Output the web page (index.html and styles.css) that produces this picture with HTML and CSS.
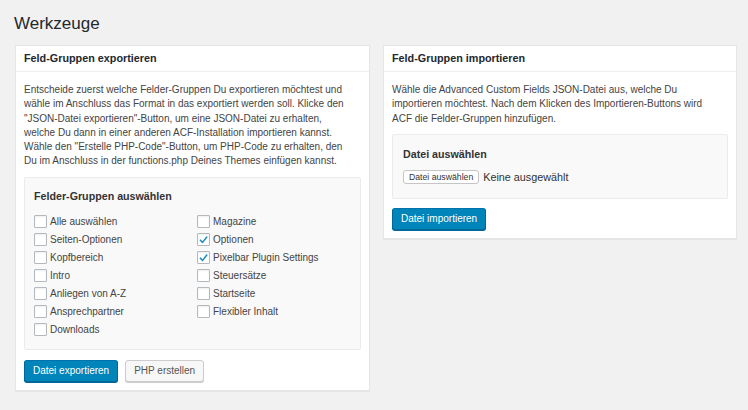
FILE: index.html
```html
<!DOCTYPE html>
<html lang="de">
<head>
<meta charset="utf-8">
<link rel="stylesheet" href="styles.css">
</head>
<body>
<div class="wrap">
  <h1 class="title">Werkzeuge</h1>
  <div class="columns">
    <div class="panel">
      <h2 class="panel-head">Feld-Gruppen exportieren</h2>
      <div class="panel-body">
        <p class="desc">Entscheide zuerst welche Felder-Gruppen Du exportieren möchtest und wähle im Anschluss das Format in das exportiert werden soll. Klicke den "JSON-Datei exportieren"-Button, um eine JSON-Datei zu erhalten, welche Du dann in einer anderen ACF-Installation importieren kannst. Wähle den "Erstelle PHP-Code"-Button, um PHP-Code zu erhalten, den Du im Anschluss in der functions.php Deines Themes einfügen kannst.</p>
        <div class="field-box">
          <div class="field-label">Felder-Gruppen auswählen</div>
          <div class="check-grid">
            <ul class="check-col">
              <li class="check"><span class="box"></span>Alle auswählen</li>
              <li class="check"><span class="box"></span>Seiten-Optionen</li>
              <li class="check"><span class="box"></span>Kopfbereich</li>
              <li class="check"><span class="box"></span>Intro</li>
              <li class="check"><span class="box"></span>Anliegen von A-Z</li>
              <li class="check"><span class="box"></span>Ansprechpartner</li>
              <li class="check"><span class="box"></span>Downloads</li>
            </ul>
            <ul class="check-col">
              <li class="check"><span class="box"></span>Magazine</li>
              <li class="check"><span class="box"><svg viewBox="0 0 12 12" width="12" height="12"><path d="M2.6 6.2 L5 8.6 L9.6 2.8" fill="none" stroke="#1e8cbe" stroke-width="1.7" stroke-linecap="round" stroke-linejoin="round"/></svg></span>Optionen</li>
              <li class="check"><span class="box"><svg viewBox="0 0 12 12" width="12" height="12"><path d="M2.6 6.2 L5 8.6 L9.6 2.8" fill="none" stroke="#1e8cbe" stroke-width="1.7" stroke-linecap="round" stroke-linejoin="round"/></svg></span>Pixelbar Plugin Settings</li>
              <li class="check"><span class="box"></span>Steuersätze</li>
              <li class="check"><span class="box"></span>Startseite</li>
              <li class="check"><span class="box"></span>Flexibler Inhalt</li>
            </ul>
          </div>
        </div>
        <div class="actions">
          <button class="btn btn-primary">Datei exportieren</button>
          <button class="btn btn-secondary">PHP erstellen</button>
        </div>
      </div>
    </div>
    <div class="panel">
      <h2 class="panel-head">Feld-Gruppen importieren</h2>
      <div class="panel-body">
        <p class="desc">Wähle die Advanced Custom Fields JSON-Datei aus, welche Du importieren möchtest. Nach dem Klicken des Importieren-Buttons wird ACF die Felder-Gruppen hinzufügen.</p>
        <div class="field-box file-box">
          <div class="field-label">Datei auswählen</div>
          <div class="file-row">
            <button class="file-btn">Datei auswählen</button>
            <span class="file-none">Keine ausgewählt</span>
          </div>
        </div>
        <div class="actions import-actions">
          <button class="btn btn-primary">Datei importieren</button>
        </div>
      </div>
    </div>
  </div>
</div>
</body>
</html>
```
FILE: styles.css
```css
* { box-sizing: border-box; }
html, body { margin: 0; padding: 0; }
body {
  background: #f1f1f1;
  font-family: "Liberation Sans", Arial, sans-serif;
  font-size: 10px;
  color: #444;
  width: 748px;
  height: 410px;
  overflow: hidden;
}
.wrap {
  padding: 10px 11px 0 15px;
}
.title {
  margin: 0 0 0 -1px;
  font-size: 17px;
  font-weight: 400;
  color: #23282d;
  line-height: 28px;
  height: 35px;
}
.columns {
  display: grid;
  grid-template-columns: 355px 354px;
  column-gap: 13px;
  align-items: start;
}
.panel {
  background: #fff;
  border: 1px solid #e5e5e5;
  box-shadow: 0 1px 1px rgba(0,0,0,0.04);
}
.panel-head {
  margin: 0;
  font-size: 10.8px;
  font-weight: 700;
  color: #23282d;
  height: 26px;
  line-height: 25px;
  padding: 0 8px;
  border-bottom: 1px solid #eee;
}
.panel-body {
  padding: 11px 16px 8px 8px;
}
.desc {
  margin: 0;
  line-height: 14.3px;
  color: #444;
}
.field-box {
  margin-top: 8px;
  margin-right: -8px;
  background: #f9f9f9;
  border: 1px solid #ebebeb;
  border-radius: 2px;
  padding: 10px 9px 10px 9px;
}
.field-label {
  font-weight: 700;
  font-size: 10.7px;
  color: #333;
  line-height: 16px;
  margin-bottom: 9px;
}
.check-grid {
  display: grid;
  grid-template-columns: 163px 1fr;
}
.check-col {
  list-style: none;
  margin: 0;
  padding: 0;
}
.check {
  display: flex;
  align-items: center;
  height: 18px;
  color: #444;
}
.box {
  display: inline-flex;
  align-items: center;
  justify-content: center;
  width: 13px;
  height: 13px;
  border: 1px solid #b4b9be;
  border-radius: 1px;
  background: #fff;
  box-shadow: inset 0 1px 2px rgba(0,0,0,0.07);
  margin-right: 3px;
  flex: none;
}
.actions {
  display: flex;
  gap: 7px;
  margin-top: 10px;
}
.import-actions {
  margin-top: 9px;
}
.btn {
  font-family: "Liberation Sans", Arial, sans-serif;
  font-size: 10px;
  height: 22px;
  line-height: 20px;
  padding: 0 8px;
  border-radius: 3px;
  border: 1px solid;
  cursor: pointer;
}
.btn-primary {
  background: #0085ba;
  border-color: #0073aa #006799 #006799;
  color: #fff;
  box-shadow: 0 1px 0 #006799;
}
.btn-secondary {
  background: #f7f7f7;
  border-color: #ccc;
  color: #555;
  box-shadow: 0 1px 0 #ccc;
}
.file-box {
  padding: 11px 10px 13px 10px;
}
.file-box .field-label {
  margin-bottom: 7px;
}
.file-row {
  display: flex;
  align-items: center;
  gap: 4px;
  height: 16px;
}
.file-btn {
  font-family: "Liberation Sans", Arial, sans-serif;
  font-size: 8.7px;
  height: 14px;
  line-height: 12px;
  padding: 0 5px;
  background: #fff;
  border: 1px solid #c5c5c5;
  border-radius: 3px;
  color: #333;
}
.file-none {
  font-size: 10.8px;
  color: #333;
}
```
